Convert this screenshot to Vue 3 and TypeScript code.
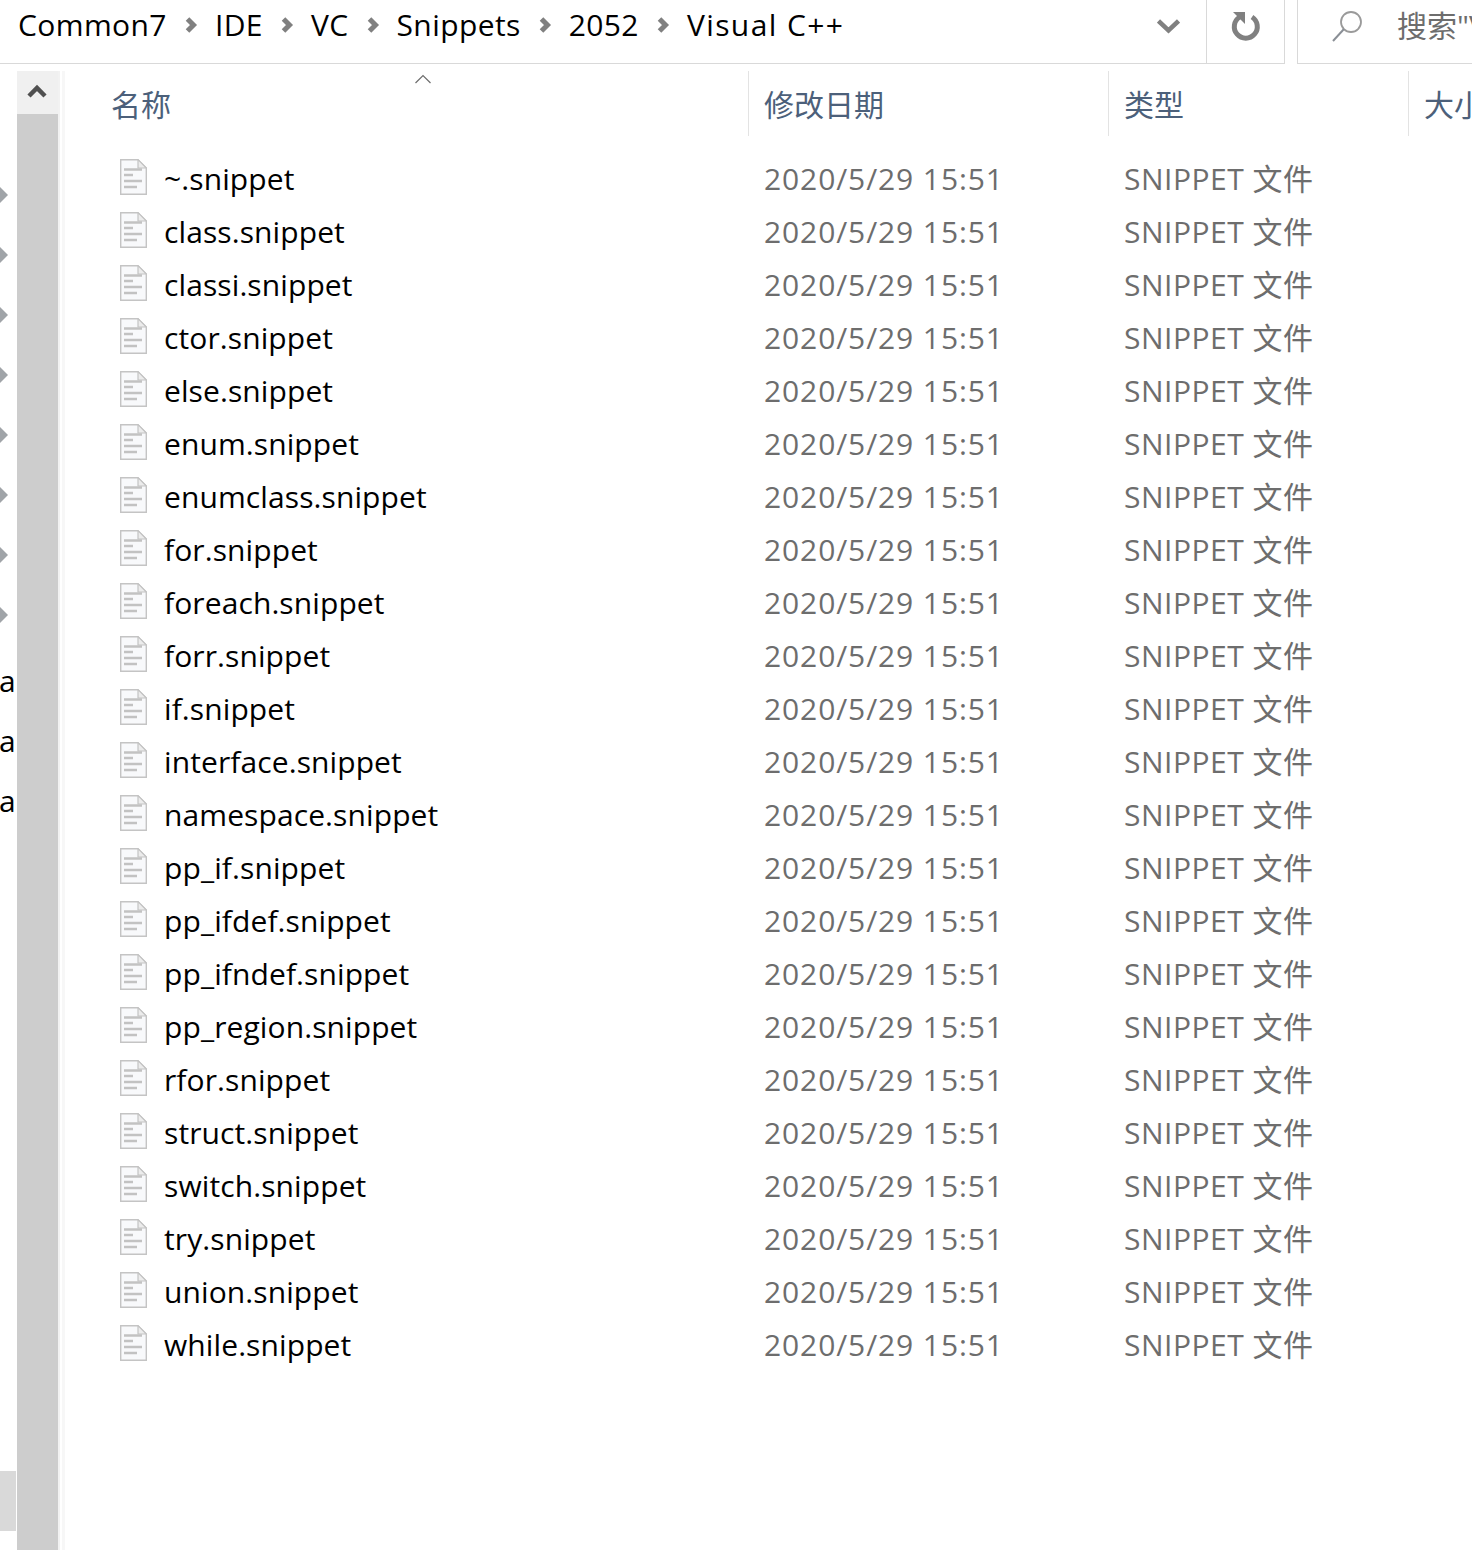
<template>
  <div class="explorer">
    <header class="topbar">
      <nav class="crumbs">
        <template v-for="(part, i) in crumbs" :key="part">
          <svg v-if="i > 0" class="crumb-arrow" width="14" height="18" viewBox="0 0 14 18">
            <path d="M3.5 3 L9.5 9 L3.5 15" fill="none" stroke="#808080" stroke-width="5" />
          </svg>
          <span class="crumb">{{ part }}</span>
        </template>
      </nav>
      <div class="history">
        <svg width="23" height="16" viewBox="0 0 23 16">
          <path d="M1.5 3 L11.5 12.5 L21.5 3" fill="none" stroke="#808080" stroke-width="4.5" />
        </svg>
      </div>
      <div class="refresh">
        <svg width="32" height="32" viewBox="0 0 32 32">
          <path d="M9.6 7 A11.5 11.5 0 1 0 22 7" fill="none" stroke="#808080" stroke-width="5" />
          <path d="M3 2 H15 V14 Z" fill="#808080" />
        </svg>
      </div>
      <div class="search">
        <svg class="search-icon" width="32" height="32" viewBox="0 0 32 32">
          <circle cx="19" cy="12" r="10" fill="none" stroke="#9a9a9a" stroke-width="1.8" />
          <path d="M12 19 L1 31" stroke="#8a8f96" stroke-width="2" />
        </svg>
        <span class="search-text">搜索"Visual C++"</span>
      </div>
    </header>

    <div class="body">
      <aside class="tree">
        <div v-for="n in 8" :key="'arrow' + n" class="tree-row">
          <span class="tree-arrow"></span>
        </div>
        <div v-for="n in 3" :key="'label' + n" class="tree-row tree-label">a</div>
        <div class="tree-selected"></div>
      </aside>

      <div class="scrollbar">
        <div class="scroll-up">
          <svg width="20" height="16" viewBox="0 0 20 16">
            <path d="M2 13 L10 5 L18 13" fill="none" stroke="#505050" stroke-width="4.5" />
          </svg>
        </div>
        <div class="scroll-thumb"></div>
      </div>
      <div class="gutter"></div>

      <main class="list">
        <div class="columns">
          <div class="col-head col-name">
            名称
            <svg class="sort-arrow" width="18" height="10" viewBox="0 0 18 10">
              <path d="M1.5 9 L9 1.5 L16.5 9" fill="none" stroke="#6d6d6d" stroke-width="1.2" />
            </svg>
          </div>
          <div class="col-head col-date">修改日期</div>
          <div class="col-head col-type">类型</div>
          <div class="col-head col-size">大小</div>
        </div>

        <div class="rows">
          <div v-for="file in files" :key="file" class="row">
            <div class="cell-name">
              <svg class="file-icon" width="27" height="36" viewBox="0 0 27 36">
                <path d="M0.7 0.7 H18 L26.3 9 V35.3 H0.7 Z" fill="#f8f9fb" stroke="#c4c4c4" stroke-width="1.4" />
                <path d="M18 0.7 V9 H26.3 Z" fill="#ececec" stroke="#c4c4c4" stroke-width="1.2" />
                <path d="M4 10.5 H22 M4 16 H13 M4 22 H22 M4 28 H17" stroke="#c2c2c2" stroke-width="2.4" />
              </svg>
              <span class="file-name">{{ file }}</span>
            </div>
            <div class="cell-date">2020/5/29 15:51</div>
            <div class="cell-type">SNIPPET 文件</div>
          </div>
        </div>
      </main>
    </div>
  </div>
</template>

<script setup lang="ts">
const crumbs: string[] = ['Common7', 'IDE', 'VC', 'Snippets', '2052', 'Visual C++']

const files: string[] = [
  '~.snippet',
  'class.snippet',
  'classi.snippet',
  'ctor.snippet',
  'else.snippet',
  'enum.snippet',
  'enumclass.snippet',
  'for.snippet',
  'foreach.snippet',
  'forr.snippet',
  'if.snippet',
  'interface.snippet',
  'namespace.snippet',
  'pp_if.snippet',
  'pp_ifdef.snippet',
  'pp_ifndef.snippet',
  'pp_region.snippet',
  'rfor.snippet',
  'struct.snippet',
  'switch.snippet',
  'try.snippet',
  'union.snippet',
  'while.snippet'
]
</script>

<style>
html,
body {
  margin: 0;
  background: #fff;
  overflow: hidden;
}
</style>

<style scoped>
.explorer {
  width: 1472px;
  height: 1550px;
  overflow: hidden;
  display: flex;
  flex-direction: column;
  background: #fff;
  font-family: "Open Sans", "Noto Sans CJK SC", sans-serif;
}

.topbar {
  height: 64px;
  flex: none;
  display: flex;
  box-sizing: border-box;
}

.crumbs {
  flex: 1;
  display: flex;
  align-items: center;
  padding: 0 0 14px 18px;
  border-bottom: 1px solid #d9d9d9;
  box-sizing: border-box;
  font-size: 30px;
  letter-spacing: 0.4px;
  color: #000;
}

.crumb:last-child {
  letter-spacing: 1.4px;
}

.crumb-arrow {
  margin: 0 17px;
  flex: none;
}

.history {
  width: 77px;
  display: flex;
  align-items: center;
  justify-content: flex-end;
  padding: 0 26px 12px 0;
  border-bottom: 1px solid #d9d9d9;
  box-sizing: border-box;
}

.refresh {
  width: 79px;
  display: flex;
  align-items: center;
  justify-content: center;
  box-sizing: border-box;
  padding-bottom: 12px;
  border-left: 1px solid #d9d9d9;
  border-right: 1px solid #d9d9d9;
  border-bottom: 1px solid #d9d9d9;
}

.search {
  width: 175px;
  margin-left: 12px;
  display: flex;
  align-items: center;
  box-sizing: border-box;
  border-left: 1px solid #d9d9d9;
  border-bottom: 1px solid #d9d9d9;
  padding: 0 0 12px 34px;
  white-space: nowrap;
  overflow: hidden;
}

.search-icon {
  flex: none;
}

.search-text {
  margin: 0 0 4px 33px;
  font-size: 30px;
  color: #6d6d6d;
}

.body {
  flex: 1;
  display: flex;
  min-height: 0;
}

.tree {
  position: relative;
  width: 16px;
  flex: none;
  margin-right: 1px;
  padding-top: 101px;
  overflow: hidden;
}

.tree-row {
  height: 60px;
  box-sizing: border-box;
  display: flex;
  align-items: center;
}

.tree-arrow {
  width: 0;
  height: 0;
  margin-left: -2px;
  border-top: 10px solid transparent;
  border-bottom: 10px solid transparent;
  border-left: 10px solid #a0a4a8;
}

.tree-label {
  padding-top: 10px;
  font-size: 30px;
  color: #000;
  transform: translateX(-1px);
}

.tree-selected {
  position: absolute;
  left: 0;
  right: 0;
  top: 1407px;
  height: 60px;
  background: #d9d9d9;
}

.scrollbar {
  width: 41px;
  flex: none;
  padding-top: 7px;
  display: flex;
  flex-direction: column;
}

.scroll-up {
  height: 43px;
  flex: none;
  background: #f0f0f0;
  display: flex;
  align-items: center;
  justify-content: center;
  padding: 0 1px 3px 0;
  box-sizing: border-box;
}

.scroll-thumb {
  flex: 1;
  background: #cdcdcd;
}

.gutter {
  width: 7px;
  flex: none;
  margin-top: 7px;
  box-sizing: border-box;
  border-left: 2px solid #f2f2f2;
  border-right: 3px solid #f7f7f7;
}

.list {
  flex: 1;
  min-width: 0;
}

.columns {
  display: grid;
  grid-template-columns: 683px 360px 300px 1fr;
  padding-top: 7px;
}

.col-head {
  height: 65px;
  display: flex;
  align-items: center;
  box-sizing: border-box;
  padding: 0 0 2px 15px;
  font-size: 30px;
  color: #4c607a;
  white-space: nowrap;
  overflow: hidden;
}

.col-date,
.col-type,
.col-size {
  border-left: 1px solid #e3e3e3;
}

.col-name {
  position: relative;
  padding-left: 46px;
  overflow: visible;
}

.sort-arrow {
  position: absolute;
  left: 349px;
  top: 3px;
}

.rows {
  padding-top: 16px;
}

.row {
  height: 53px;
  display: grid;
  grid-template-columns: 684px 360px 1fr;
  align-items: center;
  font-size: 30px;
  white-space: nowrap;
}

.cell-name {
  display: flex;
  align-items: center;
  padding-left: 55px;
}

.file-icon {
  flex: none;
  margin-bottom: 4px;
}

.file-name {
  margin-left: 17px;
  letter-spacing: 0.1px;
  color: #000;
}

.cell-date,
.cell-type {
  padding-left: 15px;
  color: #6d6d6d;
}

.cell-date {
  letter-spacing: 0.9px;
}

.cell-type {
  padding-bottom: 4px;
  letter-spacing: 0.5px;
}
</style>
